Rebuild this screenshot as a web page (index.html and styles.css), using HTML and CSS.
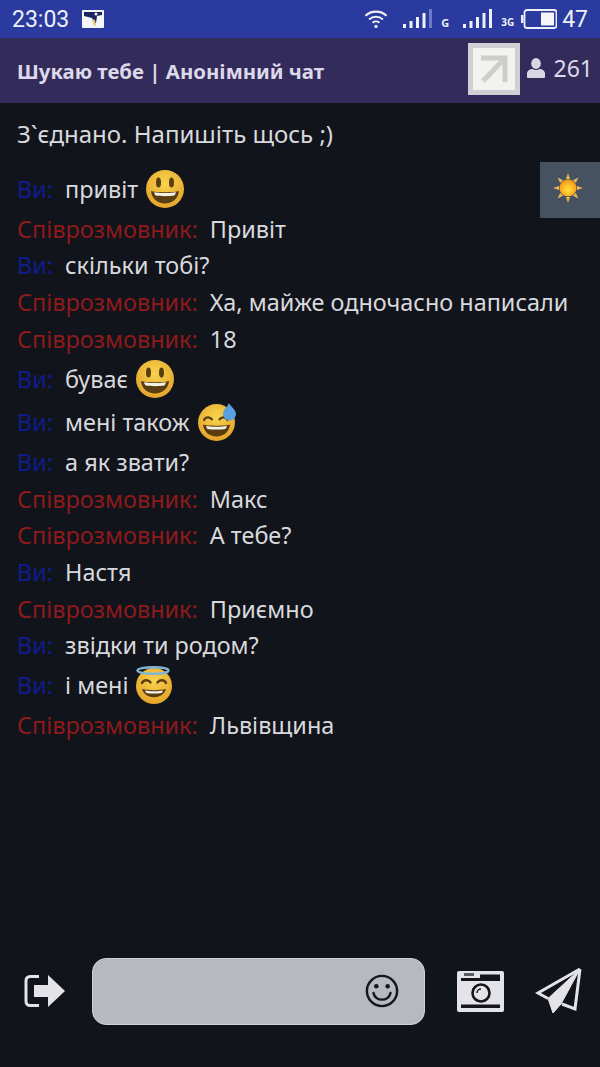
FILE: index.html
```html
<!DOCTYPE html>
<html lang="uk">
<head>
    <meta charset="UTF-8">
    <meta name="viewport" content="width=device-width, initial-scale=1.0">
    <title>Шукаю тебе | Анонімний чат</title>
    <link rel="stylesheet" href="styles.css">
</head>
<body>
    <svg class="defs" width="0" height="0">
        <defs>
            <radialGradient id="face" cx="50%" cy="35%" r="70%">
                <stop offset="0" stop-color="#f8d44e"/>
                <stop offset="1" stop-color="#e2a028"/>
            </radialGradient>
            <radialGradient id="sunCore" cx="50%" cy="60%" r="55%">
                <stop offset="0" stop-color="#ffe23c"/>
                <stop offset="1" stop-color="#f79a1c"/>
            </radialGradient>
            <symbol id="smile" viewBox="0 0 38 38">
                <circle cx="19" cy="19" r="19" fill="url(#face)"/>
                <ellipse cx="12.500" cy="12.500" rx="2.500" ry="5" fill="#5b3d12"/>
                <ellipse cx="25.500" cy="12.500" rx="2.500" ry="5" fill="#5b3d12"/>
                <path d="M5 21c4 1.600 24 1.600 28 0-.6 7.500-6.500 12.500-14 12.500S5.600 28.500 5 21z" fill="#5b3d12"/>
                <path d="M8 22.300c5 1 17 1 22 0-.5 1.800-1 2.700-1.700 3.300-4.500.8-14.100.8-18.600 0-.7-.6-1.200-1.500-1.700-3.300z" fill="#f4f1e6"/>
            </symbol>
            <symbol id="sweat" viewBox="0 0 38 38">
                <circle cx="18.500" cy="19.500" r="18.500" fill="url(#face)"/>
                <path d="M6 17c1.500-3.500 6-3.500 8-.6M21.500 16.400c2-2.900 6.500-2.900 8 .6" fill="none" stroke="#5b3d12" stroke-width="2.200" stroke-linecap="round"/>
                <path d="M5 21.500c4 1.600 23 1.600 27 0-.6 7-6 12-13.500 12S5.600 28.500 5 21.500z" fill="#5b3d12"/>
                <path d="M8 23c5 1 16 1 21 0-.4 1.500-1 2.400-1.700 3-4 .8-13.600.8-17.600 0-.7-.6-1.300-1.500-1.700-3z" fill="#f4f1e6"/>
                <path d="M31 0c1.500 3.500 7 6.500 7 11a6.500 6.500 0 0 1-13 0C25 6.500 29.500 4 31 0z" fill="#5a9fe0"/>
            </symbol>
            <symbol id="angel" viewBox="0 0 38 38">
                <circle cx="19" cy="20" r="18" fill="url(#face)"/>
                <path d="M7 17c1.500-3.500 6.500-3.500 8.500-.6M22.500 16.400c2-2.900 7-2.900 8.500 .6" fill="none" stroke="#5b3d12" stroke-width="2.400" stroke-linecap="round"/>
                <path d="M7 23c3 11 21 11 24 0-6 1.500-18 1.500-24 0z" fill="#5b3d12"/>
                <path d="M10 24.500c5 1 13 1 18 0-.5 1.500-1 2-1.500 2.500-4 .8-11 .8-15 0-.5-.5-1-1-1.500-2.500z" fill="#f4f1e6"/>
                <ellipse cx="18" cy="4.500" rx="15.500" ry="3.300" fill="none" stroke="#7fb6d6" stroke-width="2.400"/>
            </symbol>
        </defs>
    </svg>

    <div class="status-bar">
        <div class="status-left">
            <span class="clock">23:03</span>
            <svg class="notify" width="22" height="18" viewBox="0 0 22 18">
                <rect width="22" height="18" rx="1" fill="#f4f6fb"/>
                <path d="M2 2h18v3l-5 1-1 7-2 0-2-5-8-2z" fill="#1a2560"/>
                <circle cx="14" cy="4" r="1.500" fill="#f4f6fb"/>
                <path d="M10 9l3 1 1 5-2 1z" fill="#e7c87a"/>
            </svg>
        </div>
        <div class="status-right">
            <svg class="wifi" width="24" height="22" viewBox="0 0 26 22" fill="none" stroke="#eef0f8" stroke-width="2.200">
                <path d="M1.500 7.500c6.500-6 16.500-6 23 0M5.500 11.500c4.300-4 10.700-4 15 0M9.300 15c2.100-1.800 5.300-1.800 7.400 0"/>
                <circle cx="13" cy="19" r="1.800" fill="#eef0f8" stroke="none"/>
            </svg>
            <svg class="signal" width="30" height="20" viewBox="0 0 30 20" fill="#eef0f8">
                <rect x="0" y="15" width="3" height="4"/><rect x="6.500" y="12" width="3" height="7"/>
                <rect x="13" y="8" width="3" height="11"/><rect x="19.500" y="4" width="3" height="15"/>
                <rect x="26" y="0" width="3" height="19" fill="#6d7cc4"/>
            </svg>
            <span class="net">G</span>
            <svg class="signal" width="30" height="20" viewBox="0 0 30 20" fill="#eef0f8">
                <rect x="0" y="15" width="3" height="4"/><rect x="6.500" y="12" width="3" height="7"/>
                <rect x="13" y="8" width="3" height="11"/><rect x="19.500" y="4" width="3" height="15"/>
                <rect x="26" y="0" width="3" height="19"/>
            </svg>
            <span class="net">3G</span>
            <svg class="battery" width="36" height="20" viewBox="0 0 36 20">
                <rect x="3.500" y="1" width="32" height="18" rx="2.500" fill="none" stroke="#eef0f8" stroke-width="1.800"/>
                <rect x="0" y="6" width="2.400" height="8" fill="#eef0f8"/>
                <rect x="20" y="3.500" width="13" height="13" fill="#f4f6fb"/>
            </svg>
            <span class="level">47</span>
        </div>
    </div>

    <header class="top-bar">
        <div class="app-title">Шукаю тебе | Анонімний чат</div>
        <div class="ad-tile">
            <svg width="28" height="28" viewBox="0 0 28 28" fill="none" stroke="#cdcdc9" stroke-width="5">
                <path d="M1 3h24v24M25 3L3 26"/>
            </svg>
        </div>
        <div class="online">
            <svg width="18" height="20" viewBox="0 0 20 22" fill="#d9d7e4">
                <ellipse cx="10" cy="6" rx="5.400" ry="6"/>
                <path d="M0 21v-4c0-3 3-5 6-5 2.500 1.600 5.500 1.600 8 0 3 0 6 2 6 5v4c0 .6-.4 1-1 1H1c-.6 0-1-.4-1-1z"/>
            </svg>
            <span>261</span>
        </div>
    </header>

    <main class="chat">
        <p class="connected">З`єднано. Напишіть щось ;)</p>
        <div class="msg emoji-row"><span class="me">Ви:</span><span>привіт</span><svg class="emoji"><use href="#smile"/></svg></div>
        <div class="msg"><span class="them">Співрозмовник:</span><span>Привіт</span></div>
        <div class="msg"><span class="me">Ви:</span><span>скільки тобі?</span></div>
        <div class="msg"><span class="them">Співрозмовник:</span><span>Ха, майже одночасно написали</span></div>
        <div class="msg"><span class="them">Співрозмовник:</span><span>18</span></div>
        <div class="msg emoji-row"><span class="me">Ви:</span><span>буває</span><svg class="emoji"><use href="#smile"/></svg></div>
        <div class="msg emoji-row"><span class="me">Ви:</span><span>мені також</span><svg class="emoji"><use href="#sweat"/></svg></div>
        <div class="msg"><span class="me">Ви:</span><span>а як звати?</span></div>
        <div class="msg"><span class="them">Співрозмовник:</span><span>Макс</span></div>
        <div class="msg"><span class="them">Співрозмовник:</span><span>А тебе?</span></div>
        <div class="msg"><span class="me">Ви:</span><span>Настя</span></div>
        <div class="msg"><span class="them">Співрозмовник:</span><span>Приємно</span></div>
        <div class="msg"><span class="me">Ви:</span><span>звідки ти родом?</span></div>
        <div class="msg emoji-row"><span class="me">Ви:</span><span>і мені</span><svg class="emoji angel"><use href="#angel"/></svg></div>
        <div class="msg"><span class="them">Співрозмовник:</span><span>Львівщина</span></div>
    </main>

    <button class="theme-btn" type="button" aria-label="Тема">
        <svg width="30" height="30" viewBox="0 0 30 30">
            <path d="M15 0l2 6-4 0zM15 30l2-6h-4zM0 15l6-2v4zM30 15l-6-2v4zM4.400 4.400l5.700 2.900-2.800 2.800zM25.600 4.400l-5.700 2.900 2.800 2.800zM4.400 25.600l5.700-2.900-2.800-2.800zM25.600 25.600l-5.700-2.900 2.800-2.800z" fill="#e8b95a"/>
            <circle cx="15" cy="15" r="8.500" fill="url(#sunCore)"/>
        </svg>
    </button>

    <footer class="composer">
        <svg class="tool exit" width="42" height="34" viewBox="0 0 42 34">
            <path d="M15 2.500H6a4 4 0 0 0-4 4v21a4 4 0 0 0 4 4h9" fill="none" stroke="#e4e4e8" stroke-width="3"/>
            <path d="M10 11h14V1l17 16-17 16V23H10z" fill="#e4e4e8"/>
        </svg>
        <div class="input-box">
            <svg width="34" height="34" viewBox="0 0 36 36" fill="none" stroke="#14161d" stroke-width="2.600">
                <circle cx="18" cy="18" r="16"/>
                <path d="M9 20c2 9.500 16 9.500 18 0" stroke-linecap="round"/>
                <circle cx="12" cy="13" r="2.400" fill="#14161d" stroke="none"/>
                <circle cx="24" cy="13" r="2.400" fill="#14161d" stroke="none"/>
            </svg>
        </div>
        <svg class="tool" width="47" height="41" viewBox="0 0 47 41">
            <rect width="47" height="41" rx="2" fill="#e4e4e8"/>
            <path d="M4 7h19V3.500h20V10H4z" fill="#14161d"/>
            <rect x="7" y="2" width="10" height="3" fill="#5a5c64"/>
            <rect x="4" y="33.500" width="39" height="3.500" fill="#14161d"/>
            <circle cx="24" cy="22" r="8.500" fill="none" stroke="#14161d" stroke-width="2.600"/>
            <path d="M20 22a4 4 0 0 1 4-4" fill="none" stroke="#14161d" stroke-width="1.500"/>
        </svg>
        <svg class="tool send" width="47" height="48" viewBox="0 0 47 48" fill="none" stroke="#e4e4e8" stroke-width="3">
            <path d="M45 2L3 26l10 5.500M45 2l-5 40-13-5"/>
            <path d="M45 2L13 31.500 18 46l8-9z" fill="#e4e4e8" stroke-width="1"/>
        </svg>
    </footer>
</body>
</html>
```

FILE: styles.css
```css
* {
    box-sizing: border-box;
}
html, body {
    height: 100%;
}
body {
    margin: 0;
    position: relative;
    display: flex;
    flex-direction: column;
    background-color: #12141b;
    color: #d8d9dd;
    font-family: "Noto Sans", "Open Sans", sans-serif;
    overflow: hidden;
}
.defs {
    position: absolute;
}
.status-bar {
    height: 38px;
    flex: none;
    padding: 0 12px 0 12px;
    display: flex;
    justify-content: space-between;
    align-items: center;
    background-color: #2a3a9e;
    color: #eef0f8;
}
.status-left {
    display: flex;
    align-items: center;
    gap: 13px;
}
.clock {
    font-family: "Roboto", sans-serif;
    font-size: 23px;
}
.status-right {
    display: flex;
    align-items: center;
}
.wifi {
    margin-right: 15px;
}
.net {
    margin: 6px 14px 0 8px;
    font-size: 11px;
    font-weight: bold;
}
.net + .signal + .net {
    margin-right: 7px;
    font-size: 10px;
}
.level {
    margin-left: 5px;
    font-family: "Roboto", sans-serif;
    font-size: 23px;
}
.top-bar {
    height: 65px;
    flex: none;
    padding: 5px 7px 0 17px;
    display: flex;
    align-items: flex-start;
    background-color: #332c5a;
}
.app-title {
    flex: 1;
    margin-top: 14px;
    color: #dcd9ea;
    font-size: 20.400px;
    font-weight: bold;
}
.ad-tile {
    width: 52px;
    height: 52px;
    padding: 7px;
    background-color: #f2f3ee;
    border: 5px solid #cfcfd4;
}
.online {
    display: flex;
    align-items: center;
    gap: 9px;
    height: 50px;
    margin-left: 7px;
    color: #dcd9ea;
    font-size: 23px;
}
.chat {
    flex: 1;
    padding: 0 17px;
    font-size: 23.430px;
}
.connected {
    margin: 16px 0 18px;
    font-size: 24px;
    line-height: 30px;
}
.msg {
    display: flex;
    align-items: center;
    gap: 12px;
    height: 36.600px;
}
.emoji-row {
    height: 43.500px;
}
.me {
    color: #0e1d8c;
}
.them {
    color: #8e1a1c;
}
.emoji {
    width: 38px;
    height: 38px;
    margin-left: -4px;
}
.emoji.angel {
    margin-left: -6px;
}
.theme-btn {
    position: absolute;
    top: 162px;
    right: 0;
    width: 60px;
    height: 56px;
    padding: 0 4px 4px 0;
    display: flex;
    align-items: center;
    justify-content: center;
    background-color: #475260;
    border: none;
}
.composer {
    flex: none;
    height: 140px;
    padding: 0 18px 12px 24px;
    display: flex;
    align-items: center;
}
.tool {
    flex: none;
}
.exit {
    margin-right: 26px;
}
.input-box {
    width: 333px;
    height: 67px;
    margin-right: 32px;
    padding-right: 25px;
    display: flex;
    align-items: center;
    justify-content: flex-end;
    background-color: #b7b9c0;
    border: 1px solid #cfd1d5;
    border-radius: 14px;
}
.send {
    margin-left: 31px;
}
```
